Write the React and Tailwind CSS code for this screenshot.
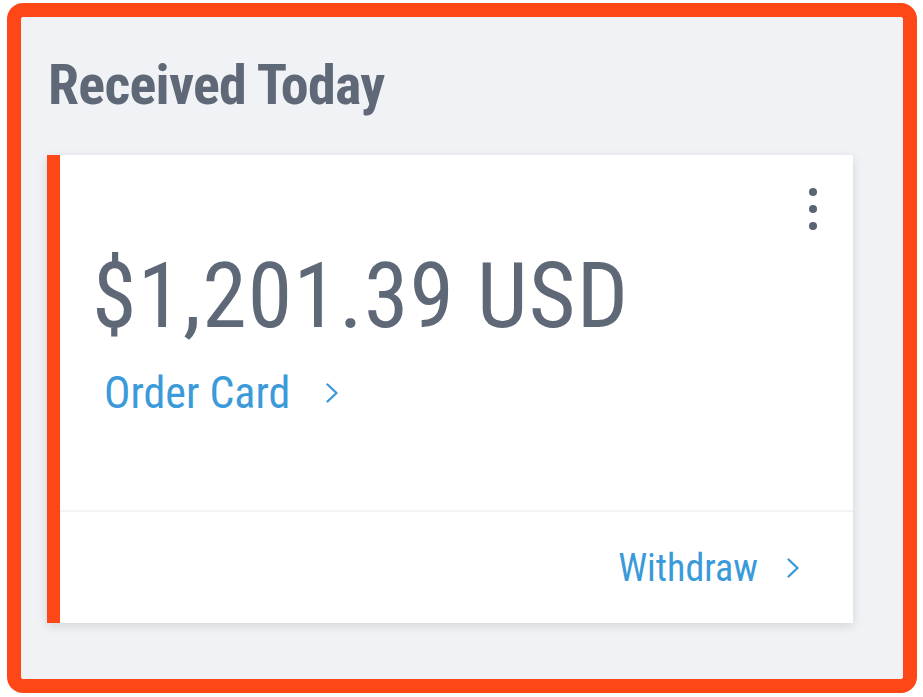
function Chevron() {
  return (
    <svg width="14" height="22" viewBox="0 0 14 22" fill="none" stroke="currentColor" strokeWidth="2.4" strokeLinecap="round" strokeLinejoin="round">
      <path d="M2.5 2.5 L11.5 11 L2.5 19.5" />
    </svg>
  )
}

export default function App() {
  return (
    <div className="w-[923px] h-[697px] bg-white pt-[3px] pl-[7px]" style={{ fontFamily: 'Roboto, "Liberation Sans", sans-serif' }}>
      <div className="w-[910px] h-[690px] rounded-[16px] border-[14px] border-[#fd4716] bg-[#f0f2f6] pl-[26px] pt-[36px]">
        <h1 className="text-[56px] leading-[64px] font-bold text-[#5e6877] pl-[1px] tracking-[-0.7px] font-stretch-condensed">Received Today</h1>

        <div className="mt-[38px] w-[806px] h-[468px] bg-white border-l-[13px] border-[#fd4716] shadow-[0_3px_10px_rgba(0,0,0,0.12)] flex flex-col">
          <div className="relative h-[355px] pl-[32px] pt-[94px]">
            <div className="absolute right-[36px] top-[33px] flex flex-col gap-[9px]">
              <span className="w-[8px] h-[8px] rounded-full bg-[#5a6474]" />
              <span className="w-[8px] h-[8px] rounded-full bg-[#5a6474]" />
              <span className="w-[8px] h-[8px] rounded-full bg-[#5a6474]" />
            </div>
            <p className="text-[90px] leading-[96px] text-[#5e6877] tracking-[1.2px] font-stretch-condensed">$1,201.39 USD</p>
            <a className="mt-[24px] ml-[12px] flex items-center gap-[35px] text-[44px] leading-[48px] text-[#3b9ad9] font-stretch-condensed">
              Order Card
              <Chevron />
            </a>
          </div>
          <div className="h-[2px] bg-[#f1f3f7]" />
          <div className="flex-1 flex items-center justify-end pr-[53px]">
            <a className="flex items-center gap-[28px] text-[38px] leading-[48px] text-[#3b9ad9] font-stretch-condensed">
              Withdraw
              <Chevron />
            </a>
          </div>
        </div>
      </div>
    </div>
  )
}
